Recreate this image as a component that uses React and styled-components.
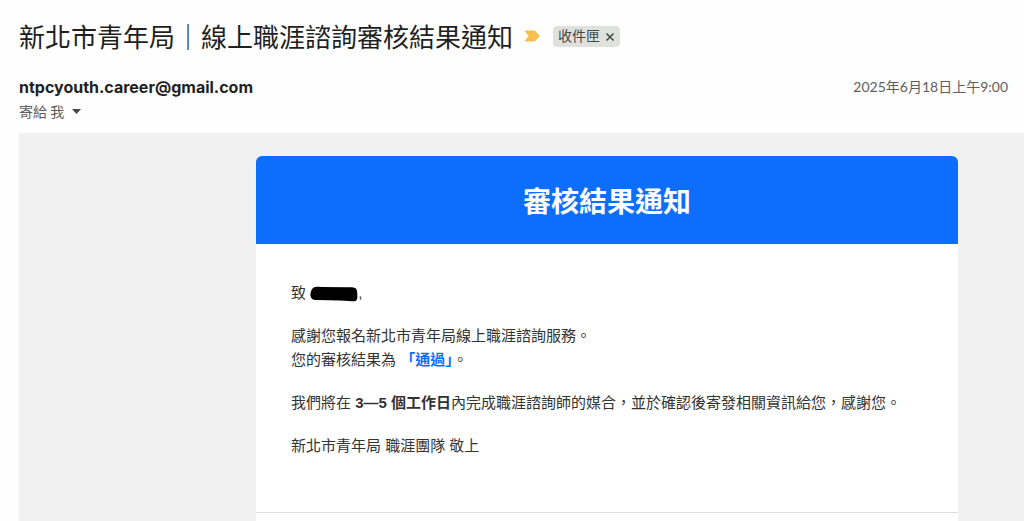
import React from 'react';
import styled, { createGlobalStyle } from 'styled-components';

const GlobalStyle = createGlobalStyle`
  * {
    box-sizing: border-box;
  }

  body {
    margin: 0;
    background-color: #fefefe;
    color: #202124;
    font-family: 'Liberation Sans', 'Noto Sans CJK TC', sans-serif;
  }
`;

const Page = styled.div`
  display: flex;
  flex-direction: column;
  min-height: 100vh;
  padding-left: 19px;
`;

const SubjectRow = styled.header`
  display: flex;
  align-items: center;
  padding-top: 16px;
`;

const Subject = styled.h1`
  margin: 0;
  color: #1f1f1f;
  font-family: 'Noto Sans CJK TC', sans-serif;
  font-size: 26px;
  font-weight: 400;
  line-height: 40px;
`;

const Marker = styled.button`
  display: flex;
  margin: 0 12px 0 11px;
  padding: 0;
  border: 0;
  background: none;
`;

const Label = styled.span`
  display: flex;
  align-items: center;
  gap: 5px;
  height: 21px;
  padding: 0 5px;
  border-radius: 4px;
  background-color: #dfe1df;
  color: #444746;
  font-size: 14px;
  line-height: 21px;
`;

const RemoveButton = styled.button`
  display: flex;
  padding: 1px 0 0;
  border: 0;
  background: none;
  color: #444746;
`;

const SenderRow = styled.div`
  display: flex;
  justify-content: space-between;
  align-items: center;
  margin-top: 19px;
  padding-right: 16px;
  line-height: 24px;
`;

const Sender = styled.span`
  color: #1f1f1f;
  font-family: Inter, sans-serif;
  font-size: 16px;
  font-weight: 700;
`;

const SentAt = styled.time`
  color: #5e5e5e;
  font-family: Lato, 'Noto Sans CJK TC', sans-serif;
  font-size: 14px;
`;

const Recipient = styled.button`
  display: flex;
  align-self: flex-start;
  align-items: center;
  gap: 8px;
  padding: 0;
  border: 0;
  background: none;
  color: #5e5e5e;
  font-family: 'Noto Sans CJK TC', sans-serif;
  font-size: 14px;
  line-height: 24px;
`;

const MessageArea = styled.main`
  display: flex;
  flex: 1;
  margin-top: 10px;
  padding: 23px 66px 0 237px;
  background-color: #f1f1f1;
`;

const Card = styled.article`
  flex: 1;
  border-radius: 6px 6px 0 0;
  overflow: hidden;
  background-color: #fff;
`;

const Banner = styled.h2`
  margin: 0;
  padding: 24px;
  background-color: #0d6efd;
  color: #fff;
  font-family: 'Noto Sans CJK TC', sans-serif;
  font-size: 28px;
  font-weight: 700;
  line-height: 40px;
  text-align: center;
`;

const Content = styled.div`
  padding: 37px 35px 35px;
  border-bottom: 1px solid #dedede;
  color: #333;
  font-size: 15px;
  line-height: 24px;
`;

const Paragraph = styled.p`
  margin: 0 0 19px;
`;

const Redacted = styled.svg`
  vertical-align: middle;
`;

const Result = styled.strong`
  color: #0d6efd;
`;

const App = () => {
  return (
    <>
      <GlobalStyle />
      <Page>
        <SubjectRow>
          <Subject>新北市青年局｜線上職涯諮詢審核結果通知</Subject>
          <Marker type="button" aria-label="重要">
            <svg width="17" height="12" viewBox="0 0 17 12">
              <path
                d="M1.6 0.5H10.2C10.8 0.5 11.2 0.7 11.6 1.2L15.2 5.3C15.6 5.8 15.6 6.2 15.2 6.7L11.6 10.8C11.2 11.3 10.8 11.5 10.2 11.5H1.6C0.9 11.5 0.7 10.9 1.1 10.4L4.6 6L1.1 1.6C0.7 1.1 0.9 0.5 1.6 0.5Z"
                fill="#f5c04e"
              />
            </svg>
          </Marker>
          <Label>
            收件匣
            <RemoveButton type="button" aria-label="移除標籤">
              <svg width="10" height="10" viewBox="0 0 10 10">
                <path d="M1.5 1.5L8.5 8.5M8.5 1.5L1.5 8.5" stroke="currentColor" strokeWidth="1.5" />
              </svg>
            </RemoveButton>
          </Label>
        </SubjectRow>
        <SenderRow>
          <Sender>ntpcyouth.career@gmail.com</Sender>
          <SentAt dateTime="2025-06-18T09:00">2025年6月18日上午9:00</SentAt>
        </SenderRow>
        <Recipient type="button">
          寄給 我
          <svg width="9" height="5" viewBox="0 0 9 5">
            <path d="M0 0H9L4.5 5Z" fill="#444746" />
          </svg>
        </Recipient>
        <MessageArea>
          <Card>
            <Banner>審核結果通知</Banner>
            <Content>
              <Paragraph>
                致{' '}
                <Redacted width="48" height="16" viewBox="0 0 48 16" aria-hidden="true">
                  <path
                    d="M3.5 1.5C6 0.3 9 1 12 0.9L36 1.3C40 1.2 44 0.8 46 2.6C47.6 5 47.2 8 47.4 11C47.4 14 46 15.6 43 15.2L30 14.6L7 14C3 14.4 0.6 12.6 0.4 9.6C0.3 6.4 1.4 3.4 3.5 1.5Z"
                    fill="#000"
                  />
                </Redacted>
                ,
              </Paragraph>
              <Paragraph>
                感謝您報名新北市青年局線上職涯諮詢服務。
                <br />
                您的審核結果為 <Result>「通過」</Result>。
              </Paragraph>
              <Paragraph>
                我們將在 <strong>3—5 個工作日</strong>內完成職涯諮詢師的媒合，並於確認後寄發相關資訊給您，感謝您。
              </Paragraph>
              <Paragraph>新北市青年局 職涯團隊 敬上</Paragraph>
            </Content>
          </Card>
        </MessageArea>
      </Page>
    </>
  );
};

export default App;
